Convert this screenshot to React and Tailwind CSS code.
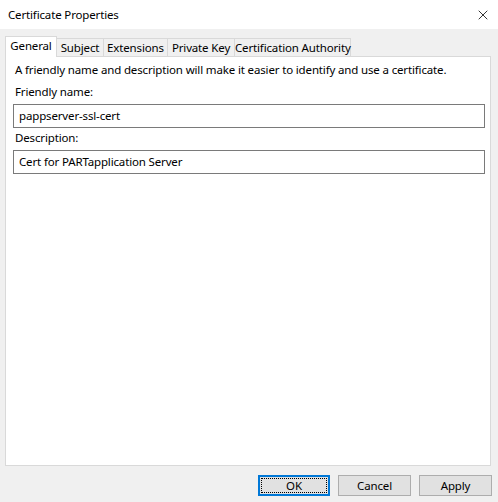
import { X } from 'lucide-react';

const font = { fontFamily: '"Noto Sans", "Open Sans", sans-serif' };

function Tab({ label, active, width }) {
  if (active) {
    return (
      <div className={`relative z-10 -mb-px h-[21px] ${width} whitespace-nowrap border border-b-0 border-[#d9d9d9] bg-white pt-[1px] text-center`}>
        {label}
      </div>
    );
  }
  return (
    <div className={`h-[18px] ${width} whitespace-nowrap border border-b-0 border-l-0 border-[#d9d9d9] bg-[#f0f0f0] pt-[1px] text-center`}>
      {label}
    </div>
  );
}

function Field({ value }) {
  return (
    <div className="ml-[7px] mr-[5px] h-[24px] border border-[#7a7a7a] bg-white px-[5px] leading-[22px]">
      {value}
    </div>
  );
}

export default function App() {
  return (
    <div className="flex h-[502px] w-[498px] flex-col bg-[#f0f0f0] text-[11.5px] leading-[16px] tracking-[-0.15px] text-black" style={font}>
      {/* Title bar */}
      <div className="flex h-[29px] items-center justify-between bg-white pl-[8px] pr-[7px]">
        <span>Certificate Properties</span>
        <X className="h-[16px] w-[16px]" strokeWidth={1.2} />
      </div>

      {/* Tabs */}
      <div className="mt-[7px] flex items-end pl-[5px]">
        <Tab label="General" width="w-[52px]" active />
        <Tab label="Subject" width="w-[47px]" />
        <Tab label="Extensions" width="w-[64px]" />
        <Tab label="Private Key" width="w-[67px]" />
        <Tab label="Certification Authority" width="w-[116px]" />
      </div>

      {/* Panel */}
      <div className="ml-[5px] mr-[7px] flex h-[410px] flex-col border border-[#d9d9d9] bg-white pt-[5px]">
        <p className="pl-[9px]">A friendly name and description will make it easier to identify and use a certificate.</p>
        <p className="mt-[6px] pl-[9px]">Friendly name:</p>
        <div className="mt-[4px]">
          <Field value="pappserver-ssl-cert" />
        </div>
        <p className="mt-[2px] pl-[9px]">Description:</p>
        <div className="mt-[4px]">
          <Field value="Cert for PARTapplication Server" />
        </div>
      </div>

      {/* Buttons */}
      <div className="mt-[9px] flex justify-end gap-[8px] pr-[6px]">
        <button className="flex h-[21px] w-[72px] items-center justify-center border-2 border-[#0078d7] bg-[#e1e1e1] p-[1px]">
          <span className="flex h-full w-full items-center justify-center border border-dotted border-black">OK</span>
        </button>
        <button className="h-[21px] w-[73px] border border-[#adadad] bg-[#e1e1e1]">Cancel</button>
        <button className="h-[21px] w-[73px] border border-[#adadad] bg-[#e1e1e1]">Apply</button>
      </div>
    </div>
  );
}
